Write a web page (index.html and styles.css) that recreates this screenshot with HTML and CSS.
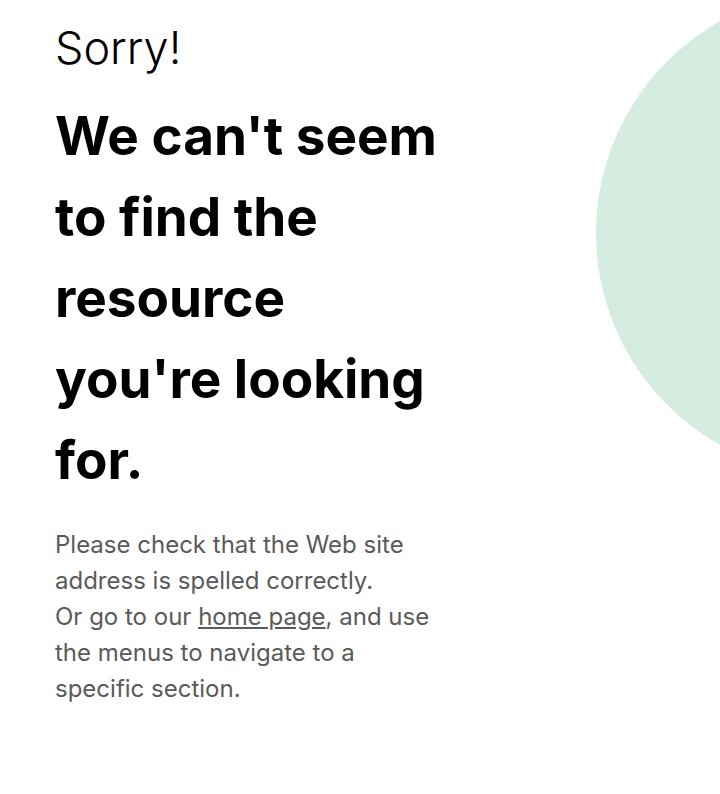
FILE: index.html
```html
<!DOCTYPE html>
<html>
<head>
<meta charset="utf-8">
<link rel="stylesheet" href="styles.css">
</head>
<body>
<div class="page">
  <div class="blob"></div>
  <main class="content">
    <p class="sorry">Sorry!</p>
    <h1 class="title">We can't seem to find the resource you're looking for.</h1>
    <p class="text">Please check that the Web site address is spelled correctly.<br>Or go to our <a href="#" class="link">home page</a>, and use the menus to navigate to a specific section.</p>
  </main>
</div>
</body>
</html>
```
FILE: styles.css
```css
html, body {
  margin: 0;
  padding: 0;
  background: #ffffff;
}
body {
  font-family: Inter, "Noto Sans", sans-serif;
  color: #000;
}
.page {
  position: relative;
  width: 720px;
  height: 794px;
  overflow: hidden;
}
.blob {
  position: absolute;
  left: 596px;
  top: -10px;
  width: 486px;
  height: 486px;
  border-radius: 50%;
  background: #d5ede0;
}
.content {
  position: relative;
  width: 386px;
  padding: 20px 0 0 55px;
}
.sorry {
  margin: 0;
  font-size: 45px;
  font-weight: 300;
  line-height: 56px;
}
.title {
  margin: 20px 0 0;
  font-size: 53px;
  font-weight: 700;
  line-height: 81px;
}
.text {
  margin: 26px 0 0;
  font-size: 24px;
  line-height: 36px;
  color: #5a5a5a;
  font-weight: 400;
}
.link {
  color: #5a5a5a;
  text-decoration: underline;
}
```
